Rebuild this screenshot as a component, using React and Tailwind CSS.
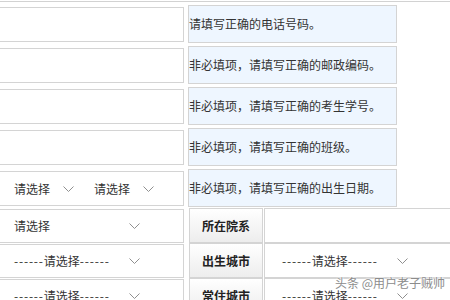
import React from 'react'

const hints = [
  '请填写正确的电话号码。',
  '非必填项，请填写正确的邮政编码。',
  '非必填项，请填写正确的考生学号。',
  '非必填项，请填写正确的班级。',
  '非必填项，请填写正确的出生日期。',
]

function Chevron() {
  return (
    <svg width="11" height="6" viewBox="0 0 11 6" className="shrink-0">
      <polyline points="0.5,0.5 5.5,5.5 10.5,0.5" fill="none" stroke="#8f8f8f" strokeWidth="1" />
    </svg>
  )
}

function Select({ label, width, chevronAt, dashed }) {
  return (
    <div className="relative h-full flex items-center" style={{ width }}>
      {dashed ? (
        <span className="pl-[13px] whitespace-nowrap">
          <span className="tracking-[0.8px]">------</span>
          {label}
          <span className="tracking-[0.8px]">------</span>
        </span>
      ) : (
        <span className="pl-[13px] whitespace-nowrap">{label}</span>
      )}
      <span className="absolute top-1/2 -translate-y-1/2" style={{ left: chevronAt }}>
        <Chevron />
      </span>
    </div>
  )
}

function LabelCell({ children }) {
  return (
    <div className="ml-[5px] w-[74px] h-[35px] shrink-0 border border-[#d4d4d4] bg-gradient-to-b from-white to-[#ededed] flex items-center justify-center font-bold text-[#222]">
      {children}
    </div>
  )
}

function LeftCell({ children }) {
  return (
    <div className="ml-[-10px] mt-[1px] w-[194px] h-[34px] shrink-0 border border-[#d4d4d4] flex">
      <div className="ml-[10px] h-full">{children}</div>
    </div>
  )
}

export default function App() {
  return (
    <div
      className="relative w-[450px] h-[300px] overflow-hidden bg-white text-[12px] text-[#333]"
      style={{ fontFamily: '"Noto Sans CJK SC", "Noto Sans", sans-serif' }}
    >
      <div className="mt-[1px] h-px bg-[#d2d2d2]" />

      <div className="mt-[3px]">
        {hints.map((h, i) => (
          <div key={i} className={`flex items-start ${i === 4 ? 'h-[39px]' : 'h-[41px]'}`}>
            <div className="ml-[-10px] mt-[2px] w-[194px] h-[35px] shrink-0 border border-[#d4d4d4] flex items-center">
              {i === 4 && (
                <div className="flex h-full ml-[10px]">
                  <Select label="请选择" width={80} chevronAt={62} />
                  <Select label="请选择" width={80} chevronAt={62} />
                </div>
              )}
            </div>
            <div className="ml-[4px] w-[209px] h-[38px] shrink-0 border border-[#d4d4d4] bg-[#eef6ff] flex items-center whitespace-nowrap overflow-hidden">
              {h}
            </div>
          </div>
        ))}
      </div>

      <div>
        <div className="flex items-start h-[35px]">
          <LeftCell>
            <Select label="请选择" width={150} chevronAt={128} />
          </LeftCell>
          <LabelCell>所在院系</LabelCell>
          <div className="ml-[1px] w-[200px] h-[35px] shrink-0 border border-[#d4d4d4]" />
        </div>

        <div className="flex items-start h-[35px]">
          <LeftCell>
            <Select label="请选择" dashed width={150} chevronAt={128} />
          </LeftCell>
          <LabelCell>出生城市</LabelCell>
          <div className="ml-[1px] w-[200px] h-[35px] shrink-0 border border-[#d4d4d4] flex">
            <div className="ml-[4px] h-full">
              <Select label="请选择" dashed width={150} chevronAt={128} />
            </div>
          </div>
        </div>

        <div className="flex items-start h-[35px]">
          <LeftCell>
            <Select label="请选择" dashed width={150} chevronAt={128} />
          </LeftCell>
          <LabelCell>常住城市</LabelCell>
          <div className="ml-[1px] w-[200px] h-[35px] shrink-0 border border-[#d4d4d4] flex">
            <div className="ml-[4px] h-full">
              <Select label="请选择" dashed width={150} chevronAt={128} />
            </div>
          </div>
        </div>
      </div>

      <div
        className="absolute left-[335px] top-[274px] text-[12px] text-[#8c8c8c] whitespace-nowrap"
        style={{ textShadow: '0 0 2px #fff, 0 0 2px #fff, 0 0 1px #fff' }}
      >
        头条 @用户老子贼帅
      </div>
    </div>
  )
}
